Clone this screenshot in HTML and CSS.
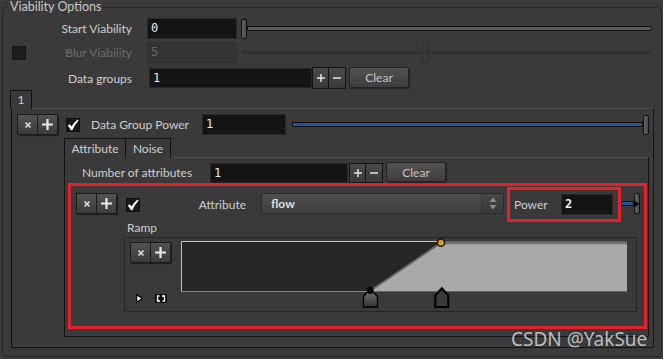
FILE: index.html
```html
<!DOCTYPE html>
<html>
<head>
<meta charset="utf-8">
<title>Viability Options</title>
<link rel="stylesheet" href="styles.css">
</head>
<body>
<div class="group">
  <div class="group-title">Viability Options</div>

  <div class="row r1">
    <span class="cbslot"></span>
    <span class="lbl">Start Viability</span>
    <div class="field f90">0</div>
    <div class="slider s1"><span class="handle"></span><span class="track grey"></span></div>
  </div>

  <div class="row r2">
    <span class="cbslot"><span class="cb cboff"></span></span>
    <span class="lbl dis">Blur Viability</span>
    <div class="field f90 fdis">5</div>
    <div class="slider s2"><span class="track thin tl"></span><span class="handle hdis"></span><span class="track thin tr"></span></div>
  </div>

  <div class="row r3">
    <span class="cbslot"></span>
    <span class="lbl">Data groups</span>
    <div class="field fdg">1</div>
    <div class="pm">
      <span class="pmb"><svg width="8" height="8" viewBox="0 0 8 8"><path d="M4 0V8M0 4H8" stroke="#e4e4e4" stroke-width="1.5"/></svg></span>
      <span class="pmb"><svg width="8" height="8" viewBox="0 0 8 8"><path d="M0 4H8" stroke="#e4e4e4" stroke-width="1.5"/></svg></span>
    </div>
    <div class="clear">Clear</div>
  </div>

  <div class="tabbar"><span class="tab">1</span></div>
  <div class="tabpane">
    <div class="row dgp">
      <div class="xp">
        <span><svg width="6" height="6" viewBox="0 0 6 6"><path d="M0.5 0.5L5.5 5.5M5.5 0.5L0.5 5.5" stroke="#d4d4d4" stroke-width="1.6"/></svg></span>
        <span><svg width="11" height="11" viewBox="0 0 11 11"><path d="M5.5 0V11M0 5.5H11" stroke="#e8e8e8" stroke-width="2.2"/></svg></span>
      </div>
      <span class="cb"><svg width="12" height="12" viewBox="0 0 12 12"><path d="M0.8 6.6L2.8 5.2L4.6 7.6Q7 3.5 10.6 0.6L11.6 1.6Q7.8 5.6 5.3 11.3H4.1Z" fill="#ffffff"/></svg></span>
      <span class="lbl2">Data Group Power</span>
      <div class="field fdgp">1</div>
      <div class="slider s3"><span class="track blue"></span><span class="handle"></span></div>
    </div>

    <div class="subbar"><span class="stab st1">Attribute</span><span class="stab st2">Noise</span></div>
    <div class="subpane">
      <div class="row noa">
        <span class="lbl3">Number of attributes</span>
        <div class="field fnoa">1</div>
        <div class="pm pm2">
          <span class="pmb"><svg width="8" height="8" viewBox="0 0 8 8"><path d="M4 0V8M0 4H8" stroke="#e4e4e4" stroke-width="1.5"/></svg></span>
          <span class="pmb"><svg width="8" height="8" viewBox="0 0 8 8"><path d="M0 4H8" stroke="#e4e4e4" stroke-width="1.5"/></svg></span>
        </div>
        <div class="clear clear2">Clear</div>
      </div>

      <div class="redbox">
        <div class="rowA">
          <div class="xp">
            <span><svg width="6" height="6" viewBox="0 0 6 6"><path d="M0.5 0.5L5.5 5.5M5.5 0.5L0.5 5.5" stroke="#d4d4d4" stroke-width="1.6"/></svg></span>
            <span><svg width="11" height="11" viewBox="0 0 11 11"><path d="M5.5 0V11M0 5.5H11" stroke="#e8e8e8" stroke-width="2.2"/></svg></span>
          </div>
          <span class="cb"><svg width="12" height="12" viewBox="0 0 12 12"><path d="M0.8 6.6L2.8 5.2L4.6 7.6Q7 3.5 10.6 0.6L11.6 1.6Q7.8 5.6 5.3 11.3H4.1Z" fill="#ffffff"/></svg></span>
          <span class="lbl4">Attribute</span>
          <div class="dropdown">
            <span class="dd-text">flow</span>
            <span class="dd-arrows"><svg width="8" height="13" viewBox="0 0 8 13"><path d="M4 0.5L7.5 5H0.5Z M4 12.5L7.5 8H0.5Z" fill="#8c8c8c"/></svg></span>
          </div>
          <div class="powerbox">
            <span class="plbl">Power</span>
            <div class="field fpow">2</div>
          </div>
          <div class="slider s4"><span class="track blue"></span><span class="handle hmark"><svg width="4" height="6" viewBox="0 0 4 6"><path d="M0 0L4 3L0 6Z" fill="#000"/></svg></span></div>
        </div>

        <div class="ramplbl">Ramp</div>
        <div class="rampbox">
          <div class="rampleft">
            <div class="xp">
              <span><svg width="6" height="6" viewBox="0 0 6 6"><path d="M0.5 0.5L5.5 5.5M5.5 0.5L0.5 5.5" stroke="#d4d4d4" stroke-width="1.6"/></svg></span>
              <span><svg width="11" height="11" viewBox="0 0 11 11"><path d="M5.5 0V11M0 5.5H11" stroke="#e8e8e8" stroke-width="2.2"/></svg></span>
            </div>
            <div class="rampicons">
              <svg class="play" width="7" height="9" viewBox="0 0 7 9"><path d="M0.7 0.7L6.3 4.5L0.7 8.3Z" fill="#ffffff" stroke="#000" stroke-width="1.2"/></svg>
              <svg class="loop" width="12" height="9" viewBox="0 0 12 9"><rect x="0" y="0" width="12" height="9" rx="1" fill="#0c0c0c"/><path d="M4.5 2H2.5V7H4 M7.5 7H9.5V2H8" stroke="#fff" stroke-width="1.3" fill="none"/><path d="M3.5 5.5L5.5 7L3.5 8.5Z M8.5 0.5L6.5 2L8.5 3.5Z" fill="#fff"/></svg>
            </div>
          </div>
          <svg class="graph" width="446" height="67" viewBox="0 0 446 67">
            <defs>
              <linearGradient id="mk" x1="0" y1="0" x2="0" y2="1">
                <stop offset="0" stop-color="#7a7a7a"/>
                <stop offset="1" stop-color="#333333"/>
              </linearGradient>
            </defs>
            <rect x="0" y="0" width="446" height="51" fill="#262626"/>
            <polygon points="189,50.5 260,1.7 446,1.7 446,50.5" fill="#a9a9a9"/>
            <line x1="189" y1="50" x2="260" y2="1.7" stroke="#686868" stroke-width="1.8"/>
            <line x1="260" y1="1.7" x2="446" y2="1.7" stroke="#727272" stroke-width="3"/>
            <path d="M0.5 50.5V0.5H260" stroke="#c6c6c6" fill="none"/>
            <line x1="0" y1="50.5" x2="189" y2="50.5" stroke="#858585"/>
            <path d="M182.5 66V55.5L189 48L196.5 55.5V66Z" fill="url(#mk)" stroke="#000" stroke-width="1.3"/>
            <path d="M254.3 66V54.5L260.8 47.3L267.3 54.5V66Z" fill="#3a3a3a" stroke="#000" stroke-width="2"/>
            <circle cx="189.2" cy="49.5" r="3.4" fill="#000"/>
            <circle cx="260" cy="1.7" r="3.6" fill="#d7a11e" stroke="#141414" stroke-width="1.5"/>
          </svg>
        </div>
      </div>
    </div>
  </div>
</div>
<div class="wm">CSDN @YakSue</div>
</body>
</html>
```

FILE: styles.css
```css
* { box-sizing: border-box; margin: 0; padding: 0; }
html, body { width: 663px; height: 359px; overflow: hidden; }
body {
  background: #3a3a3a;
  color: #cdcdcd;
  font-family: Lato, "Liberation Sans", sans-serif;
  font-size: 12px;
  position: relative;
}

.group {
  margin: 7px 1px 0 2px;
  height: 350px;
  border: 1px solid #282828;
  border-radius: 4px;
}
.group-title {
  width: max-content;
  height: 14px;
  line-height: 14px;
  margin: -8px 0 0 5px;
  padding: 0 2px;
  background: #3a3a3a;
  color: #c8c8c8;
  font-size: 12.5px;
}

.row { display: flex; align-items: center; }
.r1, .r2 { height: 21px; padding-left: 9px; }
.r1 { margin-top: 4px; }
.r2 { margin-top: 3px; }
.r3 { height: 22px; margin-top: 4px; padding-left: 9px; }

.cbslot { width: 14px; height: 14px; flex: none; display: flex; }
.lbl { width: 106px; flex: none; text-align: right; white-space: nowrap; }
.lbl.dis { color: #6b6b6b; }

.cb {
  flex: none;
  width: 14px; height: 14px;
  background: #1a1a1a;
  border: 1px solid #0e0e0e;
  display: flex; align-items: center; justify-content: center;
}
.cboff { background: #1e1e1e; border-color: #151515; }

.field {
  flex: none;
  height: 21px;
  background: #141414;
  border: 1px solid #272727;
  font-family: "DejaVu Sans Mono", monospace;
  font-size: 12px;
  line-height: 19px;
  color: #e8e8e8;
  padding-left: 3px;
}
.f90 { width: 90px; margin-left: 15px; }
.fdis { background: #343434; border-color: #323232; color: #686868; }
.fdg { width: 163px; height: 20px; line-height: 18px; margin-left: 17px; }

.slider { display: flex; align-items: center; flex: 1; height: 21px; }
.s1 { margin: 0 9px 0 4px; }
.s2 { margin: 0 9px 0 5px; }
.handle {
  flex: none;
  width: 6px; height: 20px;
  border: 1px solid #111;
  border-radius: 2px;
  background: linear-gradient(90deg, #626262, #4a4a4a);
  display: flex; align-items: center; justify-content: center;
}
.hdis { border-color: #2c2c2c; background: #3b3b3b; }
.track { display: block; flex: 1; height: 5px; border: 1px solid #0f0f0f; background: #5a5a5a; }
.track.grey { border-radius: 0 3px 3px 0; }
.track.thin { height: 3px; border: 1px solid #2e2e2e; background: #363636; }
.tl { flex: none; width: 180px; }
.tr { border-radius: 0 2px 2px 0; }
.track.blue { background: #24568f; height: 5px; border-color: #101010; }

.pm { display: flex; flex: none; height: 22px; }
.pmb {
  width: 17px; height: 100%;
  display: flex; align-items: center; justify-content: center;
  border: 1px solid #141414;
  background: linear-gradient(#4a4a4a, #393939);
}
.pmb + .pmb { margin-left: -1px; width: 18px; }

.clear {
  flex: none;
  width: 60px; height: 21px;
  margin-left: 3px;
  align-self: flex-start;
  border: 1px solid #232323;
  border-radius: 2px;
  background: linear-gradient(#525252, #3e3e3e);
  box-shadow: 1px 1px 1px rgba(0,0,0,0.35);
  color: #c4c4c4;
  display: flex; align-items: center; justify-content: center;
}

.xp { display: flex; flex: none; width: 41px; height: 21px; }
.xp span {
  flex: 1;
  display: flex; align-items: center; justify-content: center;
  border: 1px solid #1c1c1c;
  background: linear-gradient(#525252, #3c3c3c);
  box-shadow: 1px 1px 1px rgba(0,0,0,0.4);
}
.xp span + span { margin-left: -1px; }

/* tabs */
.tabbar { display: flex; height: 19px; margin: 1px 0 -1px 0; padding-left: 7px; }
.tab {
  width: 22px; height: 19px;
  border: 1px solid #111; border-bottom: none;
  background: #3a3a3a;
  text-align: center; line-height: 18px;
  color: #d0d0d0;
  position: relative; z-index: 1;
}
.tabpane {
  margin-left: 8px;
  width: 643px; height: 240px;
  border: 1px solid #131313;
  border-top-color: #4e4e4e;
}

.dgp { height: 21px; margin-top: 5px; padding-left: 5px; }
.dgp .cb { margin-left: 8px; }
.lbl2 { flex: none; width: 111px; margin-left: 11px; white-space: nowrap; }
.fdgp { width: 84px; }
.s3 { margin: 0 4px 0 6px; }

.subbar { display: flex; height: 20px; margin: 3px 0 -1px 52px; }
.stab {
  height: 20px;
  border: 1px solid #111; border-bottom: none;
  background: #3a3a3a;
  text-align: center; line-height: 19px;
  color: #cdcdcd;
  position: relative; z-index: 1;
}
.st1 { width: 62px; }
.st2 { width: 46px; margin-left: -1px; }
.subpane {
  margin-left: 52px;
  width: 585px; height: 180px;
  border: 1px solid #131313;
  border-top-color: #4e4e4e;
}

.noa { height: 21px; margin-top: 4px; padding-left: 17px; }
.lbl3 { flex: none; width: 128px; white-space: nowrap; }
.fnoa { width: 138px; height: 20px; line-height: 18px; }
.pm2 { height: 20px; margin-left: 1px; }
.clear2 { height: 20px; }

.redbox {
  margin-left: 3px;
  width: 579px; height: 146px;
  border: 3px solid #e3212b;
}
.rowA { display: flex; align-items: flex-start; height: 35px; margin-top: 1px; padding-left: 5px; }
.rowA .xp { margin-top: 6px; }
.rowA .cb { margin: 11px 0 0 9px; }
.lbl4 { flex: none; width: 106px; text-align: right; line-height: 35px; }
.dropdown {
  flex: none;
  display: flex;
  margin: 6px 0 0 15px;
  width: 243px; height: 21px;
  border: 1px solid #2a2a2a;
  border-radius: 2px;
  background: linear-gradient(#4e4e4e, #404040);
}
.dd-text { flex: 1; padding-left: 9px; font-weight: bold; color: #dedede; line-height: 19px; }
.dd-arrows {
  width: 22px;
  border-left: 1px solid #363636;
  background: linear-gradient(#464646, #393939);
  display: flex; align-items: center; justify-content: center;
}
.powerbox {
  flex: none;
  display: flex; align-items: center;
  margin-left: 3px;
  width: 114px; height: 35px;
  border: 3px solid #e3212b;
  padding-left: 4px;
}
.plbl { width: 47px; flex: none; }
.fpow { width: 52px; font-weight: bold; color: #f2f2f2; }
.s4 { flex: none; width: 19px; margin-top: 6px; }
.s4 .handle { height: 21px; }

.ramplbl { height: 12px; line-height: 12px; padding-left: 56px; }
.rampbox {
  display: flex;
  margin: 3px 0 0 53px;
  width: 513px; height: 75px;
  border: 1px solid #262626;
}
.rampleft { flex: none; width: 56px; padding: 4px 0 0 5px; display: flex; flex-direction: column; }
.rampicons { display: flex; align-items: flex-start; margin-top: 31px; padding-left: 6px; }
.loop { margin-left: 12px; }
.graph { display: block; flex: none; margin-top: 3px; overflow: visible; }

.wm {
  position: absolute;
  left: 511px; top: 330px;
  font-family: "Noto Sans", sans-serif;
  font-size: 19px;
  line-height: 19px;
  color: rgba(214, 214, 214, 0.85);
  white-space: nowrap;
}
```
